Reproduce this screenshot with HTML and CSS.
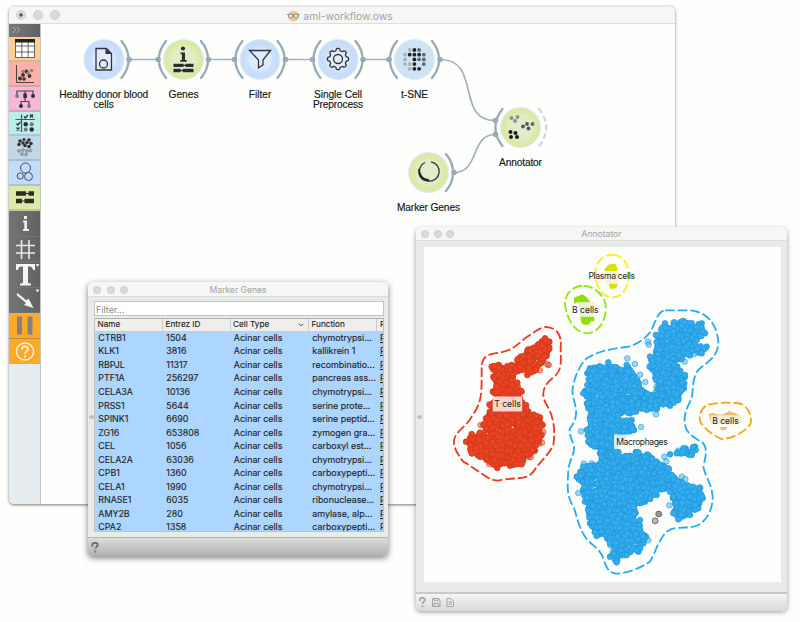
FILE: index.html
```html
<!DOCTYPE html>
<html lang="en">
<head>
<meta charset="utf-8">
<title>aml-workflow.ows</title>
<link rel="stylesheet" href="styles.css">
</head>
<body>
<main class="desktop">

<section class="window workflow">
  <header class="titlebar">
    <span class="lights big"><i class="edited"></i><i></i><i></i></span>
    <h1><svg class="face" viewBox="0 0 13 12"><circle cx="6.5" cy="6" r="5.6" fill="#f8c98c"/><path d="M0 4.500H13" stroke="#999" stroke-width="1.200"/><circle cx="3.600" cy="6" r="2.200" fill="#e8e4dc" stroke="#8a8a88"/><circle cx="9" cy="6" r="2.200" fill="#e8e4dc" stroke="#8a8a88"/></svg>aml-workflow.ows</h1>
  </header>
  <div class="workarea">
    <nav class="tools">
      <div class="expand"><svg viewBox="0 0 32 13"><path d="M4 3l3 3-3 3M8 3l3 3-3 3" fill="none" stroke="#b4b6b4"/></svg></div>
      <div class="tool data"><svg viewBox="0 0 32 25"><path d="M6.500 2.500h19v18h-19zM6.500 9h19M6.500 15h19M12.800 5v15M19.200 5v15" fill="#fff" stroke="#444" stroke-width=".8"/><path d="M6 2h20v3.500H6z" fill="#222"/></svg></div>
      <div class="tool visualize"><svg viewBox="0 0 32 25"><path d="M7.500 3v17.500H25" fill="none" stroke="#444"/><g fill="#333"><circle cx="11" cy="16.500" r="1.900"/><circle cx="14" cy="13" r="1.900"/><circle cx="17.500" cy="9.500" r="1.900"/><circle cx="20.500" cy="14" r="1.900"/><circle cx="15" cy="17" r="1.800"/></g><g fill="#888"><circle cx="14" cy="9.500" r="1.800"/><circle cx="19" cy="11" r="1.800"/><circle cx="22.500" cy="8.500" r="1.800"/></g></svg></div>
      <div class="tool model"><svg viewBox="0 0 32 25"><path d="M8 8V4h16v4M16 4v4M12 18v-3.500h8V18M16 11v4" fill="none" stroke="#444" stroke-width="1.200"/><g fill="#333"><path d="M14.300 6.500h3.600V11h-3.600z"/><circle cx="24" cy="9" r="2"/><circle cx="12" cy="19" r="2"/></g><g fill="#777"><circle cx="8" cy="9" r="1.900"/><circle cx="20" cy="19" r="1.900"/></g></svg></div>
      <div class="tool evaluate"><svg viewBox="0 0 32 25"><path d="M6.500 7.500H26M12.500 2.500V20" stroke="#555" stroke-width="1.200"/><path d="M15 4.500l1.300 1.500 2.500-3M7.500 11.500l1.300 1.500 2.500-3M21 2.500l3 3m0-3l-3 3M7.500 15.500l3 3m0-3l-3 3" fill="none" stroke="#333" stroke-width="1.300"/><g fill="#2c2c2c"><circle cx="16.700" cy="12.300" r="2.200"/><circle cx="22.700" cy="17.500" r="2.200"/></g><g fill="#777"><circle cx="22.700" cy="12.300" r="2"/><circle cx="16.700" cy="17.500" r="2"/></g></svg></div>
      <div class="tool unsup"><svg viewBox="0 0 32 25"><g fill="#333"><circle cx="11" cy="5" r="1.800"/><circle cx="15" cy="3.500" r="1.600"/><circle cx="20" cy="4" r="1.800"/><circle cx="14" cy="7" r="1.800"/><circle cx="18" cy="6.500" r="1.800"/><circle cx="22" cy="7.500" r="1.800"/><circle cx="10" cy="8.500" r="1.800"/><circle cx="16" cy="9.500" r="1.800"/><circle cx="20" cy="10.500" r="1.800"/></g><g fill="#aaa" stroke="#888" stroke-width=".8"><circle cx="10" cy="15" r="1.400"/><circle cx="14" cy="14" r="1.400"/><circle cx="18" cy="15" r="1.400"/><circle cx="21.500" cy="14.500" r="1.400"/><circle cx="13" cy="18" r="1.400"/><circle cx="17" cy="18.500" r="1.400"/></g></svg></div>
      <div class="tool single"><svg viewBox="0 0 32 25"><g fill="none" stroke="#48525e"><circle cx="16.500" cy="7" r="5"/><circle cx="11.300" cy="15" r="3.100"/><circle cx="19.500" cy="15.500" r="4"/></g></svg></div>
      <div class="tool bio"><svg viewBox="0 0 32 25"><path d="M8 7.500h17M8 15h17" stroke="#2b2b2b" stroke-width="1.200"/><path d="M7 5.300h10v4.500H7zM19.500 5.300H25v4.500h-5.500zM7 12.800h6v4.500H7zM15.500 12.800H25v4.500h-9.500z" fill="#2b2b2b"/></svg></div>
      <div class="action"><svg viewBox="0 0 32 26"><path d="M14 9.500h4V18h2v2h-6v-2h1.300v-6.500H14zM15 5h3v3h-3z" fill="#eee"/></svg></div>
      <div class="action"><svg viewBox="0 0 32 26"><path d="M12.500 3v19M20 3v19M7 8.500h19M7 16h19" stroke="#e9e9e9" stroke-width="1.600"/></svg></div>
      <div class="action"><svg viewBox="0 0 32 26"><path d="M7 2h19v6h-2c-.5-3-1.500-3.500-5-3.500V20c0 1 1 1.500 3 1.500v2H11v-2c2 0 3-.5 3-1.500V4.500c-3.500 0-4.500.5-5 3.500H7z" fill="#f5f5f5"/><path d="M26.500 2h4l-2 3z" fill="#eee"/></svg></div>
      <div class="action"><svg viewBox="0 0 32 26"><path d="M8.500 5L17.500 12.500l2-2 5 9.500-9.500-3 2-2L7.500 7z" fill="#f4f4f4"/><path d="M26.500 1.500h4l-2 3z" fill="#eee"/></svg></div>
      <div class="action orange"><svg viewBox="0 0 32 26"><path d="M8 3.500h5v18H8zM18.500 3.500h5v18h-5z" fill="#84827c"/></svg></div>
      <div class="action orange last"><svg viewBox="0 0 32 26"><circle cx="16" cy="12.500" r="8.600" fill="none" stroke="#fff4dd" stroke-width="1.500"/><path d="M13 10.500c0-4 6-4 6-.5 0 2.300-3 2-3 5M16 16.500v2" fill="none" stroke="#fff4dd" stroke-width="1.800"/></svg></div>
    </nav>
    <svg class="canvas" viewBox="41 24 634 479">
      <defs>
        <radialGradient id="blue"><stop offset="0" stop-color="#e3edfe"/><stop offset=".55" stop-color="#dce9fe"/><stop offset=".65" stop-color="#cadffc"/><stop offset="1" stop-color="#c5dcfb"/></radialGradient>
        <radialGradient id="green"><stop offset="0" stop-color="#e2edcf"/><stop offset=".6" stop-color="#e0ebc6"/><stop offset=".65" stop-color="#e8ebba"/><stop offset=".72" stop-color="#dcebac"/><stop offset="1" stop-color="#d8e8a8"/></radialGradient>
        <path id="right" d="M17.500-18.500C27-7 27 7 17.500 18.500"/>
        <path id="left" d="M-17.500-18.500C-27-7-27 7-17.500 18.500"/>
      </defs>
      <g class="links">
        <path d="M129 59.500H158M208 59.500H235M285 59.500H312M363 59.500H389M440 59.500C482 59.500 455 120.500 495 120.500M454 172.500C480 172.500 470 134.500 495 134.500"/>
        <use href="#right" x="104" y="59.500"/><use href="#left" x="183.500" y="59.500"/><use href="#right" x="183.500" y="59.500"/><use href="#left" x="260" y="59.500"/><use href="#right" x="260" y="59.500"/><use href="#left" x="338" y="59.500"/><use href="#right" x="338" y="59.500"/><use href="#left" x="414.500" y="59.500"/><use href="#right" x="414.500" y="59.500"/><use href="#right" x="428.500" y="172.500"/><use href="#left" x="520" y="127.500"/>
        <use class="free" href="#right" x="521.500" y="127.500"/>
      </g>
      <g fill="#98aab4"><circle cx="129" cy="59.500" r="2.800"/><circle cx="158" cy="59.500" r="2.800"/><circle cx="208.500" cy="59.500" r="2.800"/><circle cx="234.500" cy="59.500" r="2.800"/><circle cx="285.500" cy="59.500" r="2.800"/><circle cx="312.500" cy="59.500" r="2.800"/><circle cx="363" cy="59.500" r="2.800"/><circle cx="389" cy="59.500" r="2.800"/><circle cx="440" cy="59.500" r="2.800"/><circle cx="454" cy="172.500" r="2.800"/><circle cx="495.500" cy="120.500" r="2.800"/><circle cx="495.500" cy="134.500" r="2.800"/></g>
      <g class="nodes"><circle cx="104" cy="59.500" r="20" fill="url(#blue)"/><circle cx="183.500" cy="59.500" r="20" fill="url(#green)"/><circle cx="260" cy="59.500" r="20" fill="url(#blue)"/><circle cx="338" cy="59.500" r="20" fill="url(#blue)"/><circle cx="414.500" cy="59.500" r="20" fill="#d0e3f2"/><circle cx="428.500" cy="172.500" r="20" fill="url(#green)"/><circle cx="520.500" cy="127.500" r="20" fill="url(#green)"/></g>
      <g fill="none" stroke="#333" stroke-width="1.300">
        <path d="M96 48.500h10.500l5 5v16.500H96z"/><circle cx="103.500" cy="64" r="4"/>
        <path d="M249.500 50.500h21l-7.500 9.500v5l-4.500 2.800V60z"/>
        <circle cx="338" cy="59" r="4.500"/>
        <path id="gear"/>
        <path d="M431 161.800a9.500 9.500 0 0 1-3 19.200"/>
        <path d="M425 162.500a9.500 9.500 0 0 0-5.500 8"/>
      </g>
      <path d="M105.500 48.500v5.500h6z" fill="#333"/>
      <path d="M418.600 169c-1 7 3 12.500 10 12.200v-2c-5 0-8.500-4-9-9.700z" fill="#222" stroke="#222" stroke-width=".6"/>
      <g fill="#2d2d2d"><circle cx="183" cy="48.500" r="2.100"/><path d="M180.500 52.500h4.500v7.500h1.700v1.700h-6.500V60h1.700v-5.700h-1.400zM173.500 63.800h10v.9h2v-.9h8v3.300h-8v-1h-2v1h-10zM173.500 68.800h7v.9h2.500v-.9h10.500v3.400h-10.500v-1h-2.500v1h-7z"/></g>
      <g id="tsne"></g>
      <g fill="#8c9088"><circle cx="511.500" cy="118" r="1.900"/><circle cx="517.500" cy="117" r="1.900"/><circle cx="515" cy="121" r="1.900"/><circle cx="527" cy="124" r="1.900" fill="#555"/><circle cx="532.500" cy="124" r="1.900" fill="#666"/><circle cx="523" cy="126.500" r="1.900" fill="#555"/><circle cx="528.500" cy="128.500" r="1.900" fill="#555"/></g>
      <g fill="#1d1d1d"><circle cx="510.500" cy="132" r="2"/><circle cx="515.500" cy="133" r="2"/><circle cx="511" cy="137" r="2"/><circle cx="517" cy="137" r="2"/></g>
      <g class="names"><text x="103.700" y="98" textLength="89">Healthy donor blood</text><text x="103.700" y="108">cells</text><text x="183.500" y="98">Genes</text><text x="260" y="98">Filter</text><text x="338" y="98" textLength="48">Single Cell</text><text x="338" y="108" textLength="50">Preprocess</text><text x="414.500" y="98">t-SNE</text><text x="520.500" y="166" textLength="43">Annotator</text><text x="428.500" y="211" textLength="63">Marker Genes</text></g>
    </svg>
  </div>
</section>

<section class="window genes">
  <header class="titlebar"><span class="lights"><i></i><i></i><i></i></span><h2>Marker Genes</h2></header>
  <div class="panel">
    <div class="filter">Filter...</div>
    <div class="table">
      <div class="row head"><span>Name</span><span>Entrez ID</span><span>Cell Type<svg viewBox="0 0 6 4"><path d="M1 .8l2 2 2-2" fill="none" stroke="#444"/></svg></span><span>Function</span><span>R</span></div>
      <div id="rows"></div>
    </div>
  </div>
  <footer class="status"><svg viewBox="0 0 8 11"><path d="M1.300 4.500V3a2.700 2.200 0 0 1 5.400 0c0 1.800-2.400 1.500-2.400 4M4.200 8v2.500" fill="none" stroke="#666" stroke-width="1.800"/><path d="M2.500 3c.5-1 2.500-1 2.800 0M4.200 5v5" fill="none" stroke="#ccc" stroke-width=".6"/></svg></footer>
  <i class="grip"></i>
</section>

<section class="window annotator">
  <header class="titlebar"><span class="lights"><i></i><i></i><i></i></span><h2>Annotator</h2></header>
  <div class="plotarea">
    <svg class="plot" viewBox="424 247 357 335">
      <g transform="translate(440 310) scale(.33333)">
        <g id="tcells" class="dots red"></g>
        <path class="hull" stroke="#ee3b20" d="M125 165C130 140 140 134 165 130C215 124 225 110 255 85C285 65 300 52 318 51C350 53 366 75 362 110C362 150 368 177 345 198C310 225 300 250 320 285C345 325 345 370 340 405C330 430 300 455 280 485C260 512 230 500 175 512C140 510 130 490 70 455C50 430 40 410 42 390C50 360 80 350 95 320C125 280 124 250 125 215Z"/>
      </g>
      <g transform="translate(550 245) scale(.33333)">
        <g id="macro" class="dots azure"></g>
        <path class="hull" stroke="#25adf5" d="M345 196H420C470 200 500 235 505 290C505 340 470 350 445 375C425 400 430 440 425 460C410 490 400 510 405 540C410 570 440 580 460 595C475 615 465 640 460 665C465 695 485 715 488 755C488 805 460 840 430 845C390 850 370 845 350 860C325 885 315 925 300 950C270 970 230 985 200 986C170 985 165 955 158 935C145 905 115 895 105 875C80 835 80 805 70 785C50 755 52 725 55 675C58 645 75 625 72 605C65 580 55 565 60 550C75 530 80 515 78 495C75 470 65 450 68 430C75 390 90 360 110 340C150 315 200 310 235 305C270 295 290 275 300 262C315 240 320 200 345 196Z"/>
        <path class="hull" stroke="#ffee1a" d="M187 29C220 31 237 58 236 92C235 125 222 157 187 157C155 157 140 125 136 95C132 62 153 29 187 29Z"/>
        <path class="hull" stroke="#90e60f" d="M100 122C135 123 168 155 168 190C166 230 145 264 110 265C75 264 48 220 45 175C45 145 70 122 100 122Z"/>
        <path class="hull" stroke="#f5a816" d="M475 479C505 472 545 470 575 477C598 490 606 515 602 535C590 560 545 580 518 583C495 575 460 550 450 528C446 505 458 484 475 479Z"/>
        <g fill="#dce000"><path d="M163 72l12-12 8-4 15 1 5 15-3 8h-35zM177 118l10-4 14 1 1 10-9 6h-13z"/></g>
        <g fill="#92df00"><path d="M72 158l15-6 10-4 12 8 10 12v8H72zM91 216h42v12l-11 2-6 9H100l-7-8z"/></g>
        <path d="M476 507l12-4 8 4 20 2 22-11 18 7 18 7v20l-14 4H484zM508 546h24l-5 10h-12z" fill="#eebd72"/>
        <g fill="#e9e66a"><path d="M170 80h32v38h-32z"/></g><g fill="#b5e56a"><path d="M84 172h46v44H90z"/></g>
        <g fill="#f8f8f2" fill-opacity=".76"><path d="M164 78h38v38h-38zM76 172h55v43H76zM483 511h92v35h-92z"/></g>
      </g>
      <g class="cell-labels">
        <rect x="492.700" y="396.500" width="29.500" height="15"/><rect x="614" y="434.500" width="30" height="14.500"/>
        <text x="507.500" y="407">T cells</text><text x="642" y="445" textLength="51.500">Macrophages</text><text x="611.700" y="279" textLength="46.500">Plasma cells</text><text x="585.300" y="313">B cells</text><text x="725.500" y="424">B cells</text>
      </g>
      <g stroke="#666"><circle cx="658.700" cy="514" r="2.900" fill="#999"/><circle cx="655.200" cy="520.800" r="2.900" fill="#bbb"/></g>
    </svg>
  </div>
  <footer class="status"><svg viewBox="0 0 36 11"><g fill="none" stroke="#a4a4a4"><path d="M1.800 4V3a2.500 2.200 0 0 1 5 0c0 1.800-2.300 1.500-2.300 4M4.500 8.500v1.500" stroke-width="1.800"/><path d="M14.500 1.500h6l1.500 1.500v6.500h-7.500zM16.500 1.500v2.500h3.500v-2.500M16 9V6.500h4.500V9M29 1.500h4l2.500 2.500v5.500H29zM30.500 5h3.500M30.500 7h3.500"/></g></svg></footer>
  <i class="grip"></i>
</section>
</main>
<script src="app.js"></script>
</body>
</html>
```
FILE: styles.css
```css
* { box-sizing: border-box; }
body { margin: 0; background: #fefefd; font-family: Inter, "Liberation Sans", sans-serif; color: #222; }
.desktop { position: relative; width: 800px; height: 622px; overflow: hidden; }
svg { display: block; }

.window { position: absolute; display: flex; flex-direction: column; border-radius: 5px; background: #e9ebe9; }
.workflow { left: 9px; top: 6px; width: 666px; height: 498px; background: #fefefd; overflow: hidden; box-shadow: 0 1px 3px #777; }
.genes { left: 88px; top: 282px; width: 300px; height: 274px; box-shadow: 0 2px 6px rgba(0,0,0,.5); }
.annotator { left: 416px; top: 227px; width: 371px; height: 383px; box-shadow: 0 2px 5px rgba(0,0,0,.4); }

.titlebar { display: flex; align-items: center; justify-content: center; flex: none; height: 14px; background: #f5f6f5; border-bottom: 1px solid #dcdedc; border-radius: 5px 5px 0 0; position: relative; }
.workflow .titlebar { height: 18px; border-top: 1px solid #e6e7e5; }
.genes .titlebar { height: 15px; padding-top: 1px; }
.annotator .titlebar { padding-top: 1px; }
h1, h2 { margin: 0; font-weight: 400; color: #a2a2a2; }
h1 { display: flex; align-items: center; gap: 3px; padding-top: 1px; margin-left: -4px; font-size: 10.350px; }
h2 { font-size: 8.600px; }
.face { width: 13px; height: 12px; }
.lights { position: absolute; left: 5px; display: flex; gap: 5px; }
.lights i { width: 8px; height: 8px; border-radius: 50%; background: #dadbd9; border: 1px solid #cfcfcd; }
.annotator .lights { gap: 4.600px; }
.genes .lights { gap: 5.500px; }
.lights.big { left: 7px; gap: 7px; }
.lights.big i { width: 10px; height: 10px; }
.lights .edited { background: radial-gradient(circle, #555 0 1.200px, #dadbd9 2.200px); }

.workarea { display: flex; flex: 1; }
.tools { width: 32px; background: #e6ecf0; border-right: 1px solid #bfc3c5; }
.canvas { width: 634px; height: 479px; }
.expand { height: 13px; background: linear-gradient(90deg, #777977, #616361); }
.tool { height: 24.850px; border-bottom: 2px solid rgba(150,150,150,.4); overflow: hidden; }
.tool svg { width: 32px; height: 25px; }
.data { background: #ffcd92; }
.visualize { background: #ffafa9; }
.model { background: #f5b8da; }
.evaluate { background: #b9eeea; }
.unsup { background: #c2d7e8; }
.single { background: #c3dbfe; }
.bio { background: #dceaa9; }
.action { height: 25.600px; background: linear-gradient(90deg, #737573, #626462); border-bottom: 1px solid #737573; overflow: hidden; }
.action svg { width: 32px; height: 26px; }
.orange { background: #ffa929; border-bottom-color: #b38c50; }
.last { border-bottom: 0; }

.links { fill: none; stroke: #a2b2ba; stroke-width: 1.700; }
.links use { stroke: #98aab4; stroke-width: 2.300; stroke-linecap: round; }
.links .free { stroke: #d0d8de; stroke-dasharray: 4 5; }
.nodes circle { stroke: #e1ecee; stroke-width: 1; }
.names { font: 10.200px "Liberation Sans", sans-serif; fill: #151515; stroke: #151515; stroke-width: .15px; text-anchor: middle; }

.panel { flex: 1; display: flex; flex-direction: column; gap: 2px; padding: 4px 4px 4px 6px; min-height: 0; }
.filter { flex: none; height: 15px; padding: 2px 1px; background: #fff; border: 1px solid #c3c5c3; color: #888; font-size: 9px; line-height: 11px; }
.table { height: 214px; border: 1px solid #c0c2c0; border-top-color: #b0b2b0; background: #acd5ff; overflow: hidden; }
.row { display: grid; grid-template-columns: 68px 67.500px 78.500px 68px 10px; height: 13.550px; align-items: center; font-size: 8.900px; line-height: 13px; white-space: nowrap; -webkit-text-stroke: .12px #222; }
.row span { padding-left: 3.300px; }
.row span:last-child { padding-left: 3px; }
#rows span:last-child { text-decoration: underline; }
.head { height: 11.500px; background: #eeefed; font-size: 8.200px; line-height: 11.500px; }
.head span { padding-left: 2.500px; border-right: 1px solid #c9cbc9; }
.head span:nth-child(3) { display: flex; align-items: center; justify-content: space-between; padding-right: 4px; }
.head svg { width: 6px; height: 4px; }
.status { flex: none; height: 19px; padding: 4px 3px; border-top: 1px solid #b2b4b2; border-radius: 0 0 5px 5px; background: linear-gradient(#dcdedc, #afb1af); }
.status svg { height: 11px; }
.annotator .status { padding: 3px 2px; border-top: 2px solid #c8cac8; background: linear-gradient(#f3f4f3, #d9dbd9); }
.grip { position: absolute; left: 1px; top: 133px; width: 5px; height: 4px; border-radius: 50%; background: #bdbfbd; }
.annotator .grip { top: 188px; }

.plotarea { flex: 1; padding: 6px 6px 10px 8px; }
.plot { width: 357px; height: 335px; background: #fefefd; }
.hull { fill: none; stroke-width: 5.500; stroke-dasharray: 29 9; }
.dots circle { stroke-width: 2.200; }
.red circle { fill: #ec4322; stroke: #cc3a1b; }
.azure circle { fill: #31adf0; stroke: #2497d6; }
.dots circle.light { fill-opacity: .5; stroke-opacity: .75; }
.cell-labels { font-size: 8.600px; text-anchor: middle; }
.cell-labels text { fill: #222; }
.cell-labels rect { fill: #fff; fill-opacity: .78; }
```
FILE: app.js
```js
const SVG = "http://www.w3.org/2000/svg";
let seed = 7;
function rand() {
  seed = (seed * 16807) % 2147483647;
  return seed / 2147483647;
}

function dot(parent, x, y, r, cls) {
  const c = document.createElementNS(SVG, "circle");
  c.setAttribute("cx", x);
  c.setAttribute("cy", y);
  c.setAttribute("r", r);
  if (cls) c.setAttribute("class", cls);
  parent.appendChild(c);
  return c;
}

function inside(poly, x, y) {
  let hit = false;
  for (let i = 0, j = poly.length - 1; i < poly.length; j = i++) {
    const [ax, ay] = poly[i], [bx, by] = poly[j];
    if ((ay > y) !== (by > y) && x < (bx - ax) * (y - ay) / (by - ay) + ax) hit = !hit;
  }
  return hit;
}

// Fill a region with overlapping dots on a jittered lattice.
function cluster(id, poly, strays) {
  const g = document.getElementById(id);
  strays.forEach(([x, y]) => dot(g, x, y, 8.5, "light"));
  const xs = poly.map(p => p[0]), ys = poly.map(p => p[1]);
  const points = [];
  for (let y = Math.min(...ys); y <= Math.max(...ys); y += 8)
    for (let x = Math.min(...xs); x <= Math.max(...xs); x += 8) {
      const px = x + rand() * 14 - 7, py = y + rand() * 14 - 7;
      if (inside(poly, px, py)) points.push([px, py, rand()]);
    }
  poly.forEach(p => points.push([p[0], p[1], rand()]));
  points.sort((a, b) => a[2] - b[2]);
  points.forEach(([x, y, k]) => dot(g, x, y, 8.5, k < .08 ? "light" : ""));
}

cluster("tcells", [[315,85],[328,95],[328,115],[320,138],[303,160],[288,180],[262,195],[248,180],[235,182],[218,200],[232,218],[245,245],[240,265],[258,285],[265,305],[300,322],[308,345],[305,375],[297,400],[285,422],[265,440],[245,463],[210,467],[172,474],[150,455],[120,440],[95,430],[78,395],[95,372],[120,368],[148,385],[137,360],[130,345],[138,325],[150,305],[150,285],[168,270],[160,245],[170,225],[160,200],[155,170],[175,165],[215,165],[233,148],[263,120],[295,103]],
  [[300,181],[122,345],[322,163],[326,165],[306,398],[272,442],[158,245],[148,283],[148,462],[310,366],[266,117]]);

cluster("macro", [[120,370],[150,364],[175,352],[200,368],[230,360],[240,375],[262,405],[275,435],[300,450],[320,440],[318,405],[298,365],[300,335],[318,320],[318,270],[345,235],[400,228],[455,235],[465,265],[440,285],[435,303],[470,305],[455,325],[420,332],[395,342],[365,348],[382,365],[405,390],[402,430],[385,465],[360,482],[320,492],[290,495],[240,505],[210,505],[205,525],[245,525],[252,555],[215,580],[195,615],[230,635],[260,620],[295,630],[320,650],[355,670],[375,700],[410,720],[450,730],[458,760],[445,790],[420,810],[385,823],[370,805],[375,775],[360,740],[340,730],[320,750],[285,770],[250,785],[270,825],[270,855],[288,875],[280,895],[265,920],[230,930],[200,952],[180,935],[180,895],[160,865],[140,873],[120,835],[115,795],[105,770],[100,740],[80,695],[100,665],[150,655],[150,625],[115,590],[110,555],[120,525],[115,490],[100,445],[112,420],[112,385]],
  [[294,290],[296,299],[255,357],[270,389],[318,508],[374,350],[404,350],[93,559],[85,744],[101,656],[273,546],[358,781],[395,695],[406,702],[450,727],[349,649],[343,635],[178,880],[295,886],[286,411],[232,340],[125,655]]);
cluster("macro", [[360,628],[385,617],[400,610],[435,605],[437,615],[425,630],[380,625]], []);

const grid = [".abc.", "abbbc", "a.bcc", "aab.c", ".abb."];
const tones = { a: "#a9b3ba", b: "#222", c: "#62686c" };
grid.forEach((line, r) => [...line].forEach((k, c) => {
  if (k !== ".") dot(document.getElementById("tsne"), 405 + c * 4.700, 50 + r * 4.7, 1.900).setAttribute("fill", tones[k]);
}));

let gear = "";
for (let i = 0; i < 80; i++) {
  const a = i / 80 * Math.PI * 2;
  const r = 9.5 + Math.tanh(2.5 * Math.cos(8 * a)) * 1.1;
  gear += (i ? "L" : "M") + (338 + r * Math.cos(a)).toFixed(2) + " " + (59 + r * Math.sin(a)).toFixed(2);
}
document.getElementById("gear").setAttribute("d", gear + "Z");

const genes = [
  ["CTRB1", "1504", "chymotrypsi..."], ["KLK1", "3816", "kallikrein 1"], ["RBPJL", "11317", "recombinatio..."],
  ["PTF1A", "256297", "pancreas ass..."], ["CELA3A", "10136", "chymotrypsi..."], ["PRSS1", "5644", "serine prote..."],
  ["SPINK1", "6690", "serine peptid..."], ["ZG16", "653808", "zymogen gra..."], ["CEL", "1056", "carboxyl est..."],
  ["CELA2A", "63036", "chymotrypsi..."], ["CPB1", "1360", "carboxypepti..."], ["CELA1", "1990", "chymotrypsi..."],
  ["RNASE1", "6035", "ribonuclease..."], ["AMY2B", "280", "amylase, alp..."], ["CPA2", "1358", "carboxypepti..."]
];
document.getElementById("rows").innerHTML = genes.map(([name, id, fn]) =>
  `<div class="row"><span>${name}</span><span>${id}</span><span>Acinar cells</span><span>${fn}</span><span>P</span></div>`).join("");
```
